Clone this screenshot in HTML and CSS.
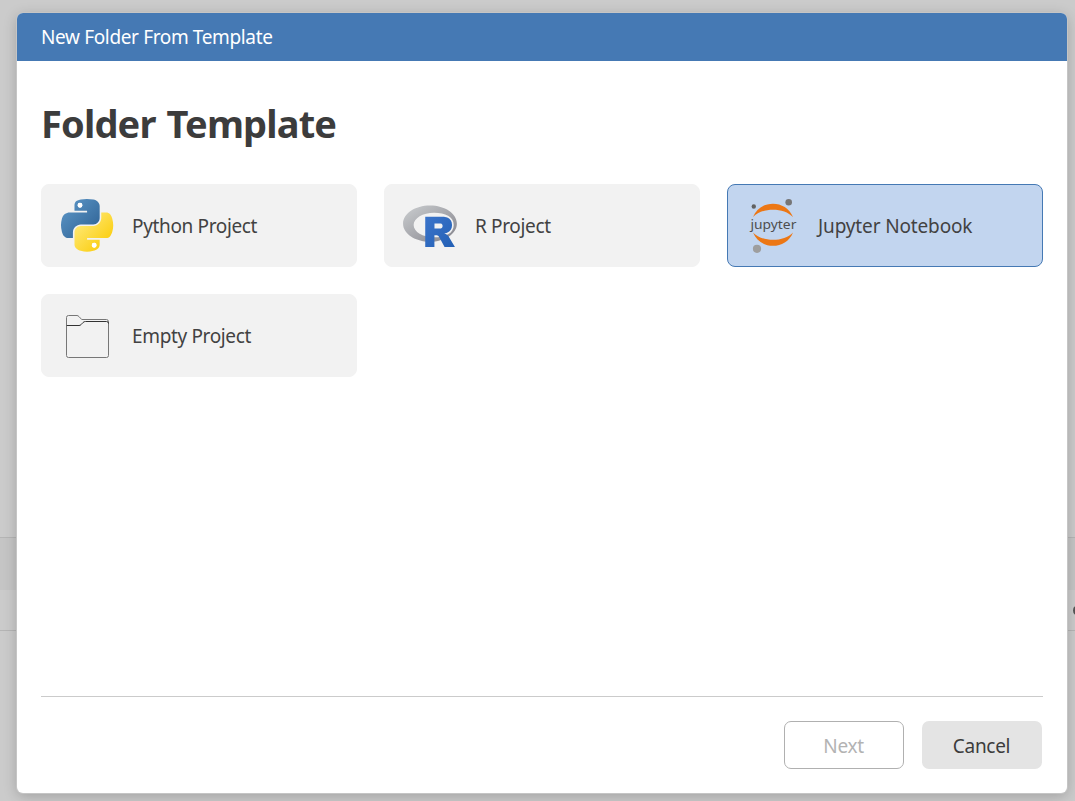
FILE: index.html
```html
<!DOCTYPE html>
<html lang="en">
<head>
<meta charset="utf-8">
<title>New Folder From Template</title>
<link rel="stylesheet" href="styles.css">
</head>
<body>
<div class="backdrop"><div class="band"></div><div class="row"><span class="glyph"></span></div></div>
<main class="dialog">
  <header class="titlebar"><span>New Folder From Template</span></header>
  <section class="content">
    <h1 class="heading"><span>Folder Template</span></h1>
    <div class="grid">
      <div class="card">
        <svg class="icon" viewBox="0 0 60 60">
          <defs>
            <linearGradient id="blue" x1="0" y1="0" x2="0.8" y2="0.8"><stop offset="0" stop-color="#5f9acb"/><stop offset="1" stop-color="#366a9c"/></linearGradient>
            <linearGradient id="gold" x1="0.1" y1="0.2" x2="0.7" y2="0.8"><stop offset="0" stop-color="#ffe976"/><stop offset="1" stop-color="#fbd11b"/></linearGradient>
          </defs>
          <g transform="translate(4 3) scale(.47)">
            <path fill="url(#blue)" fill-rule="evenodd" d="M54.92 0C50.34.02 45.96.41 42.11 1.09 30.76 3.1 28.7 7.29 28.7 15.03v10.22h26.81v3.41H18.64c-7.79 0-14.62 4.68-16.75 13.59-2.46 10.21-2.57 16.59 0 27.25 1.9 7.94 6.46 13.59 14.25 13.59h9.22V70.84c0-8.85 7.65-16.65 16.75-16.65h26.78c7.45 0 13.4-6.14 13.4-13.63V15.03c0-7.26-6.13-12.72-13.4-13.94C64.28.33 59.5-.02 54.92 0zM40.42 8.22a5.1 5.1 0 1 1 0 10.22 5.1 5.1 0 0 1 0-10.22z"/>
            <path fill="url(#gold)" fill-rule="evenodd" d="M85.64 28.66v11.9c0 9.23-7.83 17-16.75 17H42.11c-7.34 0-13.41 6.28-13.41 13.63v25.53c0 7.27 6.32 11.54 13.41 13.62 8.48 2.5 16.62 2.95 26.78 0 6.75-1.95 13.4-5.88 13.4-13.62V86.5H55.51v-3.41H95.7c7.79 0 10.7-5.43 13.41-13.59 2.8-8.4 2.68-16.47 0-27.25-1.93-7.76-5.61-13.59-13.41-13.59zM70.58 93.31a5.1 5.1 0 1 1 0 10.22 5.1 5.1 0 0 1 0-10.22z"/>
            <path fill="#fff" d="M40.42 8.22a5.1 5.1 0 1 1 0 10.22 5.1 5.1 0 0 1 0-10.22zM70.58 93.31a5.1 5.1 0 1 1 0 10.22 5.1 5.1 0 0 1 0-10.22z"/>
          </g>
        </svg>
        <span class="label python">Python Project</span>
      </div>
      <div class="card">
        <svg class="icon" viewBox="0 0 60 60">
          <defs>
            <linearGradient id="ring" x1="0" y1="0" x2="1" y2="1"><stop offset="0" stop-color="#cbced0"/><stop offset="1" stop-color="#84838b"/></linearGradient>
            <linearGradient id="rblue" x1="0" y1="0" x2="1" y2="1"><stop offset="0" stop-color="#3b74ca"/><stop offset="1" stop-color="#2360b5"/></linearGradient>
          </defs>
          <g transform="translate(3 9.4) scale(.0746)" fill-rule="evenodd">
            <path fill="url(#ring)" d="M361.5 485.9C162.3 485.9.9 377.8.9 244.5S162.3 3 361.5 3 722 111.1 722 244.5 560.6 485.9 361.5 485.9zM416.6 97.4c-151.3 0-274 73.9-274 165.1s122.7 165.1 274 165.1 263.1-50.6 263.1-165.1S568 97.4 416.6 97.4z"/>
            <path fill="url(#rblue)" d="M550 377s21.8 6.6 34.5 13c4.4 2.2 12 6.7 17.5 12.5 5.4 5.7 8 11.5 8 11.5l86 145H557l-65-122s-13.3-22.9-21.5-29.5C463.7 402 460.8 400 454 400h-33v159H298V153h247s112.5 2 112.5 109S550 377 550 377zm-53.5-136H422v69h74.5s34.5-.1 34.5-35.1c0-35.7-34.5-33.9-34.5-33.9z"/>
          </g>
        </svg>
        <span class="label rproj">R Project</span>
      </div>
      <div class="card selected">
        <svg class="icon" viewBox="0 0 60 60">
          <g fill="#ec7715"><path d="M10 21C17 3.2 43 3.2 50 21 41 11.2 19 11.2 10 21z"/><path d="M10 36.5C17 54.3 43 54.3 50 36.5 41 46.3 19 46.3 10 36.5z"/></g>
          <circle cx="45.7" cy="6.2" r="3.3" fill="#767677"/><circle cx="10.8" cy="10.5" r="2.2" fill="#616262"/><circle cx="14" cy="52.8" r="4.1" fill="#9e9e9e"/>
          <text class="wordmark" x="7.4" y="32.6" textLength="46" lengthAdjust="spacingAndGlyphs">jupyter</text>
        </svg>
        <span class="label jupyter">Jupyter Notebook</span>
      </div>
      <div class="card">
        <svg class="icon" viewBox="0 0 60 60" fill="none" stroke-width="1">
          <path stroke="#777" d="M9.5 19.4V11.5Q9.5 9.5 11.5 9.5H20Q21 9.5 22 10.6L24.7 13.5H49.5Q51.5 13.5 51.5 16V49.5Q51.5 51.5 49.5 51.5H11.5Q9.5 51.5 9.5 49.5z"/>
          <path stroke="#333" d="M9.5 19.5H22Q23.2 19.5 24 18.7L26 16.5Q27 15.5 28.5 15.5H49.5Q51.5 15.5 51.5 17.5"/>
        </svg>
        <span class="label empty">Empty Project</span>
      </div>
    </div>
  </section>
  <footer class="footer">
    <button class="btn next" disabled><span>Next</span></button>
    <button class="btn cancel"><span>Cancel</span></button>
  </footer>
</main>
</body>
</html>
```
FILE: styles.css
```css
* { box-sizing: border-box; }
body {
  margin: 0;
  width: 1075px;
  height: 801px;
  overflow: hidden;
  padding: 13px 8px 8px 17px;
  background: #cbcbcb;
  font-family: "Noto Sans", "Open Sans", sans-serif;
  color: #3c3c3c;
}
.backdrop { position: absolute; left: 0; top: 537px; width: 1075px; height: 94px; border-top: 1px solid #b5b5b5; border-bottom: 1px solid #b5b5b5; }
.band { height: 52px; background: #c5c5c5; }
.row { overflow: hidden; display: flex; justify-content: flex-end; padding-top: 16px; }
.glyph { width: 7px; height: 9px; margin-right: -5px; border: 2px solid #555; border-radius: 50%; }
.dialog {
  position: relative;
  width: 1050px;
  height: 780px;
  display: flex;
  flex-direction: column;
  background: #fff;
  border-radius: 6px;
  box-shadow: 0 0 0 1px #c5c5c5, 0 3px 14px rgba(0,0,0,.22);
}
.titlebar {
  height: 48px;
  padding: 0 24px;
  display: flex;
  align-items: center;
  background: #4579b4;
  color: #fff;
  border-radius: 6px 6px 0 0;
  font-size: 19px;
  line-height: 48px;
  letter-spacing: -.36px;
}
.content { flex: 1; padding: 35px 24px 0; }
.heading { margin: 0 0 33px; font-size: 38px; line-height: 55px; font-weight: 700; letter-spacing: -.84px; word-spacing: 2px; white-space: nowrap; }
.grid { display: grid; grid-template-columns: repeat(3, 316px); gap: 27px; }
.card { height: 83px; display: flex; align-items: center; padding: 0 15px; gap: 15px; background: #f2f2f2; border: 1px solid #f2f2f2; border-radius: 8px; font-size: 19px; color: #424242; }
.card.selected { background: #c2d5ef; border-color: #4579b4; }
.icon { width: 60px; height: 60px; flex: none; }
.label { white-space: nowrap; letter-spacing: -.35px; }
.label.jupyter { letter-spacing: -.14px; }
.wordmark { font: 13px "Noto Sans", sans-serif; fill: #4e4e4e; }
.footer { height: 97px; margin: 0 24px; padding: 24px 1px 0 0; display: flex; justify-content: flex-end; gap: 18px; border-top: 1px solid #cbcbcb; }
.btn { width: 120px; height: 48px; border-radius: 7px; padding: 1px 1px 0 0; font: 19px "Noto Sans", sans-serif; letter-spacing: -.3px; }
.next { background: #fff; border: 1px solid #b0b0b0; color: #b3b3b3; }
.cancel { background: #e4e4e4; border: 0; color: #3c3c3c; }
```
